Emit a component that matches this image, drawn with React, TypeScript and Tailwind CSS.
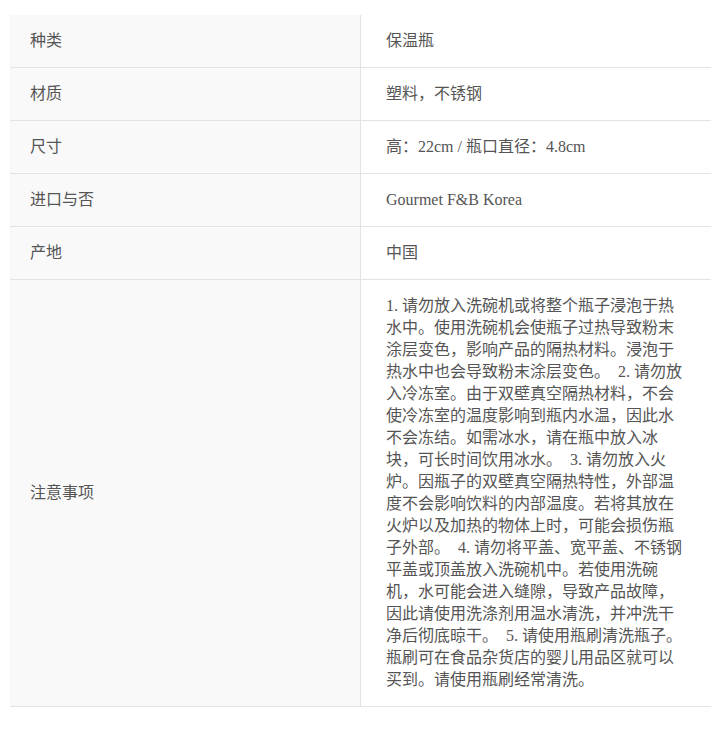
const rows: { label: string; value: string }[] = [
  { label: '种类', value: '保温瓶' },
  { label: '材质', value: '塑料，不锈钢' },
  { label: '尺寸', value: '高：22cm / 瓶口直径：4.8cm' },
  { label: '进口与否', value: 'Gourmet F&B Korea' },
  { label: '产地', value: '中国' },
];

const notes = [
  '1. 请勿放入洗碗机或将整个瓶子浸泡于热',
  '水中。使用洗碗机会使瓶子过热导致粉末',
  '涂层变色，影响产品的隔热材料。浸泡于',
  '热水中也会导致粉末涂层变色。  2. 请勿放',
  '入冷冻室。由于双壁真空隔热材料，不会',
  '使冷冻室的温度影响到瓶内水温，因此水',
  '不会冻结。如需冰水，请在瓶中放入冰',
  '块，可长时间饮用冰水。  3. 请勿放入火',
  '炉。因瓶子的双壁真空隔热特性，外部温',
  '度不会影响饮料的内部温度。若将其放在',
  '火炉以及加热的物体上时，可能会损伤瓶',
  '子外部。  4. 请勿将平盖、宽平盖、不锈钢',
  '平盖或顶盖放入洗碗机中。若使用洗碗',
  '机，水可能会进入缝隙，导致产品故障，',
  '因此请使用洗涤剂用温水清洗，并冲洗干',
  '净后彻底晾干。  5. 请使用瓶刷清洗瓶子。',
  '瓶刷可在食品杂货店的婴儿用品区就可以',
  '买到。请使用瓶刷经常清洗。',
];

const font = { fontFamily: '"Liberation Serif", "Noto Sans CJK SC", serif' };

export default function App() {
  return (
    <div className="bg-white min-h-[741px] pt-[15px] pl-[10px] pr-[10px]" style={font}>
      <div className="w-[701px]">
        {rows.map((r) => (
          <div key={r.label} className="flex border-b border-[#e3e3e3]">
            <div className="w-[351px] h-[52px] bg-[#f9f9f9] border-r border-[#e3e3e3] flex items-center pl-5 text-[16px] text-[#555]">
              {r.label}
            </div>
            <div className="flex-1 h-[52px] flex items-center pl-[25px] text-[16px] text-[#555]">
              {r.value}
            </div>
          </div>
        ))}
        <div className="flex border-b border-[#e3e3e3]">
          <div className="w-[351px] bg-[#f9f9f9] border-r border-[#e3e3e3] flex items-center pl-5 text-[16px] text-[#555]">
            注意事项
          </div>
          <div className="flex-1 pl-[25px] pt-[15px] pb-[15px] text-[16px] leading-[22px] text-[#555]">
            {notes.map((l, i) => (
              <div key={i} className="whitespace-pre">{l}</div>
            ))}
          </div>
        </div>
      </div>
    </div>
  );
}
